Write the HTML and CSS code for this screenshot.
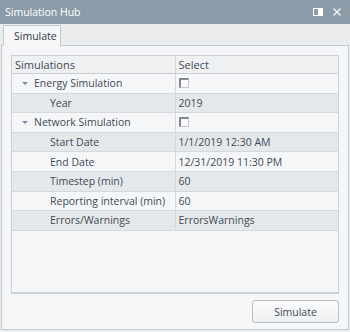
FILE: index.html
```html
<!DOCTYPE html>
<html lang="en">
<head>
    <meta charset="UTF-8">
    <title>Simulation Hub</title>
    <link rel="stylesheet" href="styles.css">
</head>
<body>
    <div class="window">
        <div class="titlebar">
            <span class="title">Simulation Hub</span>
            <span class="controls">
                <svg width="10" height="8" viewBox="0 0 10 8"><rect x="0.5" y="0.5" width="9" height="7" fill="none" stroke="#fff"/><rect x="5" y="0" width="5" height="8" fill="#fff"/></svg>
                <svg width="8" height="8" viewBox="0 0 8 8"><path d="M0.5 0.5L7.5 7.5M7.5 0.5L0.5 7.5" stroke="#fff" stroke-width="1.1"/></svg>
            </span>
        </div>
        <div class="tabs">
            <div class="tab">Simulate</div>
        </div>
        <div class="panel">
            <div class="grid">
                <table>
                    <tr class="head"><th>Simulations</th><th>Select</th></tr>
                    <tr><td class="group"><span class="arrow"></span>Energy Simulation</td><td><span class="check"></span></td></tr>
                    <tr class="alt"><td class="child">Year</td><td>2019</td></tr>
                    <tr><td class="group"><span class="arrow"></span>Network Simulation</td><td><span class="check"></span></td></tr>
                    <tr class="alt"><td class="child">Start Date</td><td>1/1/2019 12:30 AM</td></tr>
                    <tr><td class="child">End Date</td><td>12/31/2019 11:30 PM</td></tr>
                    <tr class="alt"><td class="child">Timestep (min)</td><td>60</td></tr>
                    <tr><td class="child">Reporting interval (min)</td><td>60</td></tr>
                    <tr class="alt"><td class="child">Errors/Warnings</td><td>ErrorsWarnings</td></tr>
                </table>
            </div>
            <div class="actions">
                <button class="button">Simulate</button>
            </div>
        </div>
    </div>
</body>
</html>
```

FILE: styles.css
```css
body {
    margin: 0;
    font-family: "Open Sans", "Noto Sans", sans-serif;
    font-size: 10.5px;
    color: #3e4b57;
    background-color: #d6d9dc;
}
.window {
    width: 350px;
    height: 332px;
    background-color: #eaecee;
    display: flex;
    flex-direction: column;
}
.titlebar {
    height: 24px;
    background-color: #8b9ca8;
    color: #fff;
    display: flex;
    align-items: center;
    justify-content: space-between;
    padding: 0 9px 0 5px;
    flex-shrink: 0;
}
.title {
    font-size: 10.5px;
}
.controls {
    display: flex;
    align-items: center;
    gap: 10px;
}
.tabs {
    height: 21px;
    padding-left: 3px;
    display: flex;
    align-items: flex-end;
    flex-shrink: 0;
}
.tab {
    width: 58px;
    height: 21px;
    margin-bottom: -1px;
    box-sizing: border-box;
    border: 1px solid #c4c9cd;
    border-bottom: none;
    background-color: #f5f6f8;
    color: #2f3b45;
    padding: 3px 0 0 10px;
    position: relative;
    z-index: 1;
}
.panel {
    flex: 1;
    margin: 0 1px 2px 1px;
    border: 1px solid #c4c9cd;
    background-color: #f5f6f8;
    padding: 9px 9px 6px 9px;
    display: flex;
    flex-direction: column;
}
.grid {
    flex: 1;
    border: 1px solid #cdd1d5;
    border-bottom-width: 2px;
    background-color: #f5f6f8;
}
table {
    width: 100%;
    border-collapse: collapse;
    table-layout: fixed;
}
th, td {
    height: 18.6px;
    padding: 0 0 0 3px;
    text-align: left;
    font-weight: normal;
    border-bottom: 1px solid #d6d9dc;
    white-space: nowrap;
}
th {
    background-color: #eef0f2;
    color: #3e4b57;
    font-size: 11px;
    height: 17px;
    border-bottom: 1px solid #c9cdd1;
}
th:first-child, td:first-child {
    border-right: 1px solid #d6d9dc;
}
tr.alt td {
    background-color: #e5e8ea;
}
td.group {
    padding-left: 10px;
}
td.child {
    padding-left: 38px;
}
.arrow {
    display: inline-block;
    width: 0;
    height: 0;
    border-left: 3px solid transparent;
    border-right: 3px solid transparent;
    border-top: 3px solid #6f8fae;
    margin-right: 6px;
    vertical-align: 2px;
}
.check {
    display: inline-block;
    width: 7px;
    height: 7px;
    background-color: #fbfbfc;
    border: 1px solid #c3c7cb;
    border-top: 2px solid #80878e;
    border-left: 2px solid #80878e;
    vertical-align: -1px;
}
.actions {
    display: flex;
    justify-content: flex-end;
    padding-top: 6px;
}
.button {
    width: 87px;
    height: 23px;
    font-family: "Open Sans", "Noto Sans", sans-serif;
    font-size: 10.5px;
    color: #3e4b57;
    background: linear-gradient(#fbfbfc, #eef0f2);
    border: 1px solid #b9bec3;
    border-radius: 3px;
    padding: 0;
}
```
